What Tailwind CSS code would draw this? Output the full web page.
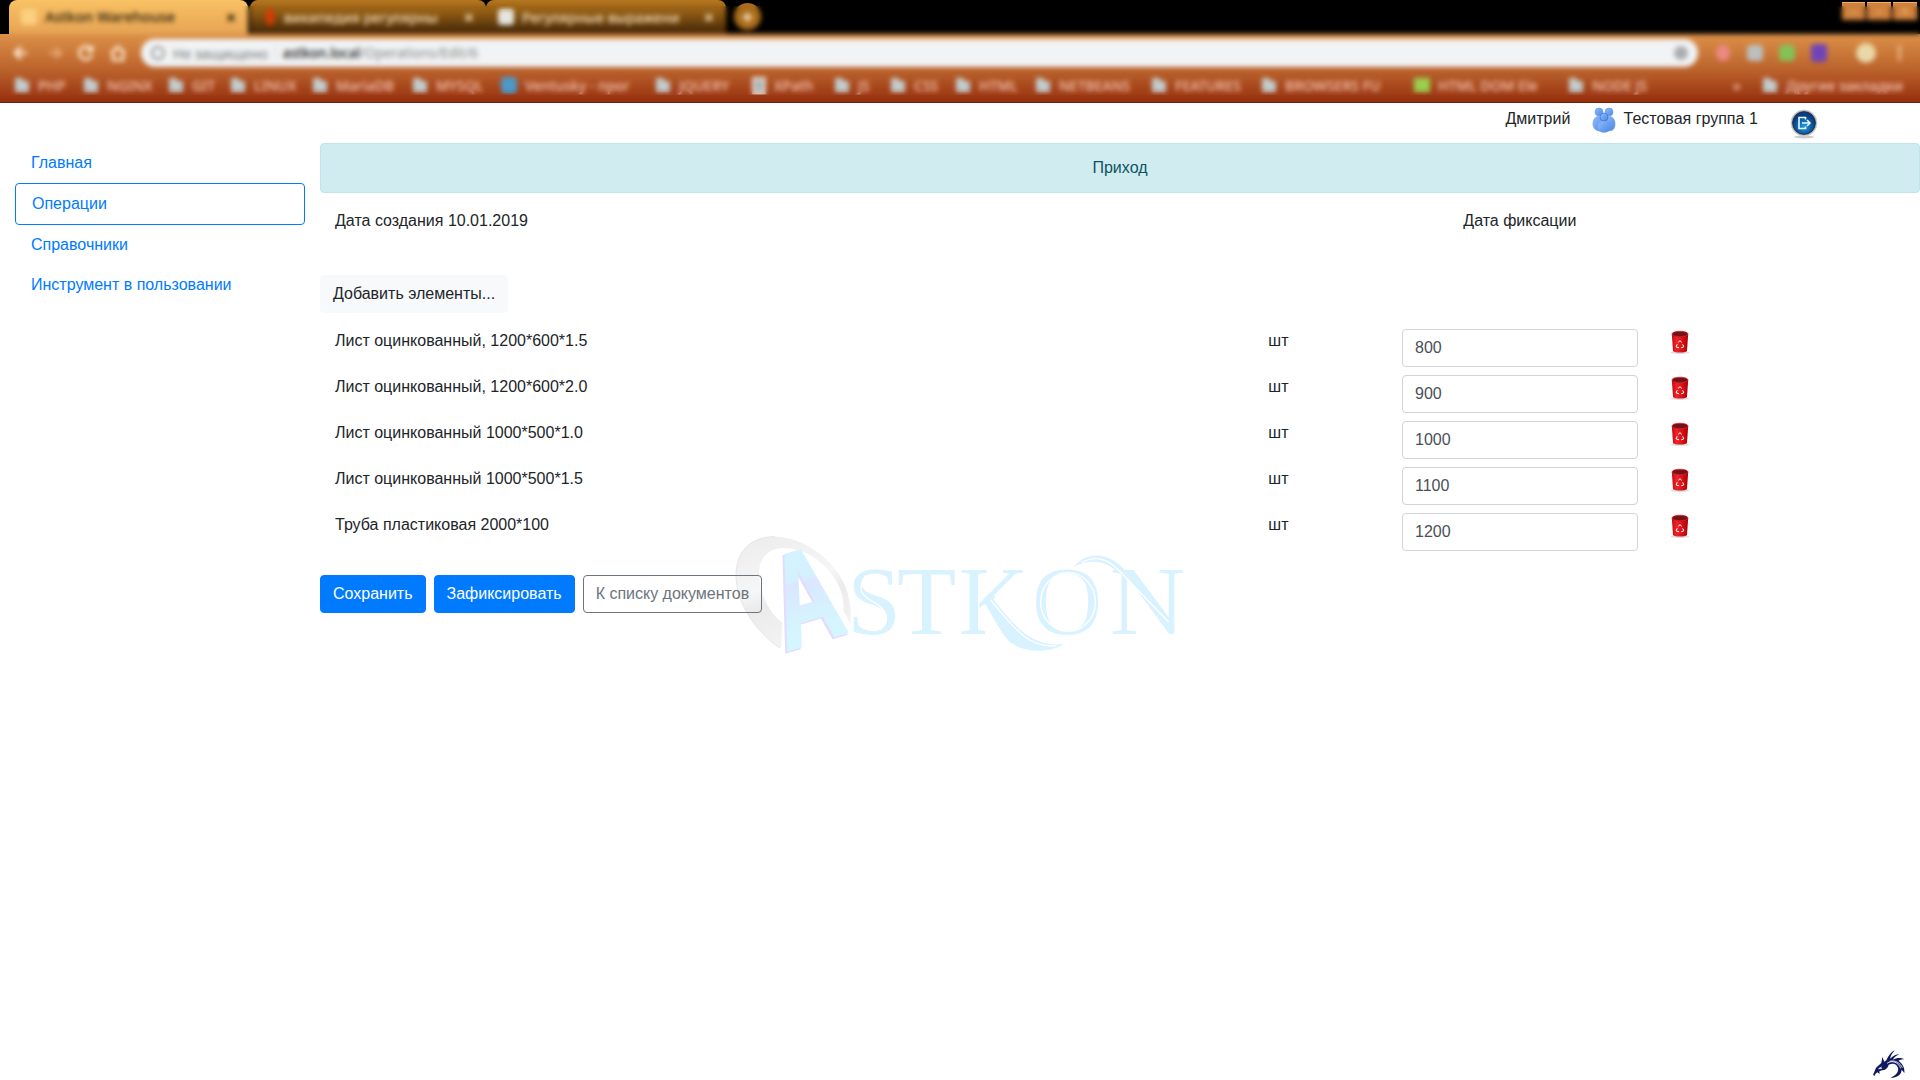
<!DOCTYPE html>
<html lang="ru">
<head>
<meta charset="utf-8">
<title>Astkon Warehouse</title>
<script src="https://cdn.jsdelivr.net/npm/@tailwindcss/browser@4"></script>
</head>
<body class="relative h-[1080px] w-[1920px] overflow-hidden bg-white font-['Liberation_Sans',Arial,sans-serif] text-base text-[#212529]">
<svg class="absolute" width="0" height="0">
  <defs>
    <symbol id="folder" viewBox="0 0 16 14"><path d="M1 0h7l2 3h5v11H1z" fill="#c3cccd"/></symbol>
    <linearGradient id="binBody" x1="0" x2="1"><stop offset="0" stop-color="#c40a10"/><stop offset=".3" stop-color="#f0232a"/><stop offset=".7" stop-color="#d30c12"/><stop offset="1" stop-color="#a80408"/></linearGradient>
    <symbol id="bin" viewBox="0 0 20 26">
      <ellipse cx="10" cy="23.500" rx="9.500" ry="1.500" fill="#ddd"/>
      <path d="M1.800 5l1.200 17c2 2 12 2 14 0l1.200-17z" fill="url(#binBody)"/>
      <ellipse cx="10" cy="5" rx="8" ry="2.800" fill="#741317" stroke="#d3242a" stroke-width=".8"/>
      <path d="M8.200 13.300L10 11.700l1.800 1.700M12.700 15.300l1.100 2.600-2.600 .9M7.200 15.200l-1.100 2.700 3 .9" fill="none" stroke="#fff" stroke-width="1"/>
    </symbol>
  </defs>
</svg>

<!-- Browser window frame -->
<header class="relative h-[103px] overflow-hidden bg-black font-['Noto_Sans',sans-serif] text-[13px]">
  <div class="flex h-[34px] items-stretch pl-[9px]">
    <div class="flex w-[239px] items-center rounded-t-lg bg-linear-to-b from-[#f9c264] to-[#e6a354] pr-3 pl-3 text-[#2b1d08]">
      <span class="mr-2 h-4 w-4 rounded bg-[#fbd080]"></span><span class="text-[14.500px] font-medium">Astkon Warehouse</span><span class="ml-auto text-lg font-bold">×</span>
    </div>
    <div class="ml-0.5 flex w-[236px] items-center rounded-t-lg bg-linear-to-b from-[#b6771f] via-[#80500f] to-[#402408] px-3 text-[#f2dcb8]">
      <span class="mr-2.5 ml-1 h-4 w-2 rounded-full bg-[#d73b04]"></span><span class="text-[14px] font-medium whitespace-nowrap">википедия регулярны</span><span class="ml-auto text-lg font-bold">×</span>
    </div>
    <div class="flex w-[240px] items-center rounded-t-lg bg-linear-to-b from-[#b6771f] via-[#80500f] to-[#402408] px-3 text-[#f2dcb8]">
      <span class="mr-2 h-4 w-4 rounded bg-[#e5e5df]"></span><span class="text-[14px] font-medium whitespace-nowrap">Регулярные выражени</span><span class="ml-auto text-lg font-bold">×</span>
    </div>
    <div class="mt-[3px] ml-2 flex h-[27px] w-[27px] items-center justify-center rounded-full bg-[#a96c1c] text-xl font-bold text-[#fff0d0]">+</div>
    <div class="mt-0.5 mr-[3px] ml-auto flex h-[18px] gap-0.5 text-[#f4c78d]">
      <span class="flex w-[23px] items-center justify-center border-t border-[#f0b071] bg-[#cf813c]">–</span>
      <span class="flex w-[24px] items-center justify-center border-t border-[#f0b071] bg-[#cf813c]">▫</span>
      <span class="flex w-[24px] items-center justify-center border-t border-[#f0b071] bg-[#cf813c]">×</span>
    </div>
  </div>
  <div class="h-[69px] border-b border-[#6d2208] bg-linear-to-b from-[#dc9148] via-[#b9602a] via-55% to-[#952d0d]">
    <div class="flex h-[38px] items-center pl-3">
      <svg class="h-5 w-[116px]" viewBox="0 0 116 20" fill="none" stroke="#fff0d8" stroke-width="2.600">
        <path d="M15 10H3m6-6l-6 6 6 6"/><path d="M37 10h12m-6-5l6 5-6 5" stroke="#e5aa74"/><path d="M79 6a6.500 6.500 0 1 0 1 6M80 3v5h-5"/><path d="M99 10l7-6 7 6m-12-1v8h10V9"/>
      </svg>
      <div class="ml-[13px] flex h-7 w-[1557px] items-center rounded-full bg-[#f1f3f4] px-2.5 text-[#777]">
        <span class="h-3.5 w-3.5 rounded-full border-2 border-[#8b8e92]"></span>
        <span class="ml-2 text-[14px]">Не защищено</span><span class="mx-[7px] h-4 w-px bg-[#d0d0d0]"></span>
        <span class="text-[13.500px] font-medium text-[#111]">astkon.local</span><span class="text-[13.500px] text-[#888]">/Operations/Edit/6</span>
        <span class="ml-auto h-3.5 w-3.5 rounded-full bg-[#a9adb1]"></span>
      </div>
      <span class="ml-[18px] h-4 w-3.5 rounded-full bg-[#ec8982]"></span>
      <span class="ml-[17px] h-4 w-4 rounded-sm bg-[#bcc0bf]"></span>
      <span class="ml-4 h-4 w-4 rounded-sm bg-[#83c257]"></span>
      <span class="ml-4 h-[18px] w-4 rounded-sm bg-[#7044b8]"></span>
      <span class="ml-[29px] h-5 w-5 rounded-full bg-[#e9d9a8]"></span>
      <span class="ml-[22px] h-4 w-[3px] bg-[#e8b684]"></span>
    </div>
    <div class="flex h-[26px] items-center pl-[14px] text-[14px] font-medium whitespace-nowrap text-[#f7c9b8]">
      <div class="flex w-[69px] items-center gap-2"><svg class="h-3.5 w-4"><use href="#folder"/></svg>PHP</div>
      <div class="flex w-[85px] items-center gap-2"><svg class="h-3.5 w-4"><use href="#folder"/></svg>NGINX</div>
      <div class="flex w-[62px] items-center gap-2"><svg class="h-3.5 w-4"><use href="#folder"/></svg>GIT</div>
      <div class="flex w-[82px] items-center gap-2"><svg class="h-3.5 w-4"><use href="#folder"/></svg>LINUX</div>
      <div class="flex w-[100px] items-center gap-2"><svg class="h-3.5 w-4"><use href="#folder"/></svg>MariaDB</div>
      <div class="flex w-[89px] items-center gap-2"><svg class="h-3.5 w-4"><use href="#folder"/></svg>MYSQL</div>
      <div class="flex w-[154px] items-center gap-2"><span class="h-4 w-4 rounded bg-[#4b9acb]"></span>Ventusky - прог</div>
      <div class="flex w-[97px] items-center gap-2"><svg class="h-3.5 w-4"><use href="#folder"/></svg>JQUERY</div>
      <div class="flex w-[82px] items-center gap-2"><span class="h-[17px] w-3.5 border-3 border-[#e4d9ce] bg-[#a7b3b8]"></span>XPath</div>
      <div class="flex w-[56px] items-center gap-2"><svg class="h-3.5 w-4"><use href="#folder"/></svg>JS</div>
      <div class="flex w-[65px] items-center gap-2"><svg class="h-3.5 w-4"><use href="#folder"/></svg>CSS</div>
      <div class="flex w-[80px] items-center gap-2"><svg class="h-3.5 w-4"><use href="#folder"/></svg>HTML</div>
      <div class="flex w-[116px] items-center gap-2"><svg class="h-3.5 w-4"><use href="#folder"/></svg>NETBEANS</div>
      <div class="flex w-[110px] items-center gap-2"><svg class="h-3.5 w-4"><use href="#folder"/></svg>FEATURES</div>
      <div class="flex w-[153px] items-center gap-2"><svg class="h-3.5 w-4"><use href="#folder"/></svg>BROWSERS FU</div>
      <div class="flex w-[154px] items-center gap-2"><span class="h-3.5 w-4 bg-[#9ad04f]"></span>HTML DOM Ele</div>
      <div class="flex w-[165px] items-center gap-2"><svg class="h-3.5 w-4"><use href="#folder"/></svg>NODE JS</div>
      <div class="w-[29px]">»</div>
      <div class="flex items-center gap-2"><svg class="h-3.5 w-4"><use href="#folder"/></svg>Другие закладки</div>
    </div>
  </div>
  <!-- Privacy blur over tabs, address and bookmarks -->
  <div class="absolute top-1.5 right-0 left-[9px] h-[89px] backdrop-blur-[2.500px]"></div>
</header>

<!-- Watermark logo -->
<svg class="absolute top-[520px] left-[720px] h-[150px] w-[480px]" viewBox="0 0 1440 450">
  <defs>
    <linearGradient id="ring" x1="0" y1="0" x2="0.300" y2="1"><stop offset="0" stop-color="#ececec"/><stop offset=".5" stop-color="#f6f6f6"/><stop offset=".65" stop-color="#ebebeb"/><stop offset="1" stop-color="#f3f3f3"/></linearGradient>
    <linearGradient id="letter" x1="0" y1="0" x2="0" y2="1"><stop offset="0" stop-color="#d3f4ff"/><stop offset=".38" stop-color="#d4f0ff"/><stop offset=".4" stop-color="#dbe6ff"/><stop offset=".65" stop-color="#d5f3ff"/><stop offset="1" stop-color="#d3fbff"/></linearGradient>
  </defs>
  <path d="M180 384C100 330 48 245 48 163C50 90 95 50 165 50C250 52 330 110 370 185C388 225 394 262 392 312L370 272C375 225 352 180 325 150C285 105 235 82 185 84C140 88 115 120 117 163C120 220 145 275 187 308L184 380Z" fill="url(#ring)"/>
  <path d="M180 384C100 330 48 245 48 163C50 90 95 50 165 50" fill="none" stroke="#e6e6e6" stroke-width="3"/>
  <g font-family="Liberation Sans" font-weight="bold" font-size="300">
    <text transform="matrix(.88 -.27 .36 1.28 193 397)" fill="#e2dcff" stroke="#e2dcff" stroke-width="8">A</text>
    <text transform="matrix(.88 -.27 .36 1.28 198 392)" fill="url(#letter)" stroke="url(#letter)" stroke-width="6">A</text>
  </g>
  <g fill="#d9f2ff" font-family="Liberation Serif" font-size="291">
    <text y="342"><tspan x="382">S</tspan><tspan x="531">T</tspan><tspan x="716">K</tspan><tspan x="936">O</tspan><tspan x="1169" textLength="227" lengthAdjust="spacingAndGlyphs">N</tspan></text>
    <path d="M808 250L850 205L945 330V350H795V320Z" fill="#fff"/>
    <path d="M788 240L808 222C870 300 925 385 1030 372C1000 396 920 404 872 368C840 340 815 280 788 240Z"/>
    <path d="M1062 140C1100 95 1160 95 1210 145L1240 185L1205 165C1160 120 1110 115 1062 140Z"/>
  </g>
  <g fill="none" stroke="#fff" stroke-width="4">
    <path d="M639 166V330M776 164V330M812 240C875 315 925 388 1010 377M1085 127C1140 100 1175 125 1210 165L1345 305M438 165C405 215 430 230 475 255C510 280 500 310 480 330"/>
    <ellipse cx="1044" cy="246" rx="82" ry="88"/>
  </g>
</svg>

<!-- User bar -->
<div class="relative flex h-10 items-start pt-1 pl-[1505.500px] leading-6">
  <span class="w-[86px]">Дмитрий</span>
  <svg class="h-[26px] w-6" viewBox="0 0 24 26">
    <defs><linearGradient id="user" x1="0" y1="0" x2="1" y2="1"><stop offset="0" stop-color="#91bdff"/><stop offset="1" stop-color="#4c87e2"/></linearGradient></defs>
    <g fill="url(#user)" stroke="#6298e8" stroke-width=".6"><circle cx="7" cy="5" r="4"/><circle cx="17" cy="5" r="4"/><path d="M1 17C1 7 12 7 12 17s-11 8-11 0z"/><path d="M12 17c0-10 11-10 11 0s-11 8-11 0z"/><path d="M5 20c0-9 14-9 14 0 0 7-14 7-14 0z"/><circle cx="12" cy="10" r="4" stroke="#316bca"/></g>
  </svg>
  <span class="ml-2 w-[165px]">Тестовая группа 1</span>
  <svg class="mt-px h-[31px] w-[30px]" viewBox="0 0 30 31">
    <defs><radialGradient id="exit" cy=".65"><stop offset="0" stop-color="#1d9be0"/><stop offset="1" stop-color="#0b3c80"/></radialGradient></defs>
    <ellipse cx="15" cy="29" rx="10" ry="1.500" fill="#ccc"/><circle cx="15" cy="15" r="13" fill="#aaa" stroke="#d0d0d0"/><circle cx="15" cy="15" r="11.300" fill="url(#exit)" stroke="#163052"/>
    <path d="M16.500 11.500V9.500H10v11h6.500v-2M13 15h8M18 12l3 3-3 3" fill="none" stroke="#e5faff" stroke-width="1.600"/>
  </svg>
</div>

<div class="relative flex">
  <nav class="w-80 px-[15px] leading-6 text-[#007bff]">
    <a class="block px-4 py-2">Главная</a>
    <a class="block rounded border border-[#007bff] px-4 py-2">Операции</a>
    <a class="block px-4 py-2">Справочники</a>
    <a class="block px-4 py-2">Инструмент в пользовании</a>
  </nav>
  <main class="flex-1 leading-6">
    <div class="mb-4 rounded border border-[#bee5eb] bg-[#d1ecf1] py-3 text-center text-[#0c5460]">Приход</div>
    <div class="flex h-[66px] pl-[15px]"><span class="w-[1128.300px]">Дата создания 10.01.2019</span><span>Дата фиксации</span></div>
    <button class="mb-4 block rounded border border-[#f8f9fa] bg-[#f8f9fa] px-3 py-1.5">Добавить элементы...</button>
    <div class="grid grid-cols-[933.300px_133.700px_268px_20px] gap-y-2 pl-[15px]">
      <span>Лист оцинкованный, 1200*600*1.5</span><span>шт</span><input class="h-[38px] w-[236px] rounded border border-[#ced4da] bg-white px-3 text-[#495057]" value="800"><svg class="h-[26px] w-5"><use href="#bin"/></svg>
      <span>Лист оцинкованный, 1200*600*2.0</span><span>шт</span><input class="h-[38px] w-[236px] rounded border border-[#ced4da] bg-white px-3 text-[#495057]" value="900"><svg class="h-[26px] w-5"><use href="#bin"/></svg>
      <span>Лист оцинкованный 1000*500*1.0</span><span>шт</span><input class="h-[38px] w-[236px] rounded border border-[#ced4da] bg-white px-3 text-[#495057]" value="1000"><svg class="h-[26px] w-5"><use href="#bin"/></svg>
      <span>Лист оцинкованный 1000*500*1.5</span><span>шт</span><input class="h-[38px] w-[236px] rounded border border-[#ced4da] bg-white px-3 text-[#495057]" value="1100"><svg class="h-[26px] w-5"><use href="#bin"/></svg>
      <span>Труба пластиковая 2000*100</span><span>шт</span><input class="h-[38px] w-[236px] rounded border border-[#ced4da] bg-white px-3 text-[#495057]" value="1200"><svg class="h-[26px] w-5"><use href="#bin"/></svg>
    </div>
    <div class="mt-6 flex gap-2">
      <button class="rounded border border-[#007bff] bg-[#007bff] px-3 py-1.5 text-white">Сохранить</button>
      <button class="rounded border border-[#007bff] bg-[#007bff] px-3 py-1.5 text-white">Зафиксировать</button>
      <button class="rounded border border-[#6c757d] px-3 py-1.5 text-[#6c757d]">К списку документов</button>
    </div>
  </main>
</div>

<!-- Dragon emblem pinned to the corner -->
<svg class="absolute top-[1049px] left-[1872px] h-[30px] w-[34px]" viewBox="0 0 102 90" fill="#10185f">
  <path d="M3 78L12 56L28 42L31 24L37 38L43 34C50 18 58 9 68 4C59 14 56 22 54 29C64 20 73 16 82 15C71 21 66 26 62 32C76 25 88 26 97 31C88 31 83 33 80 35C91 44 99 55 97 73C94 67 91 64 88 63C90 76 76 86 55 87C70 80 81 70 78 57C73 42 62 42 50 47C47 59 38 64 30 64L22 67L23 75L16 70L10 75L9 80Z"/>
  <path d="M29 54l-9 5 10-1M45 43C60 32 80 40 86 58M53 37C70 32 85 43 91 56" fill="none" stroke="#fff" stroke-width="2.500"/>
</svg>
</body>
</html>
